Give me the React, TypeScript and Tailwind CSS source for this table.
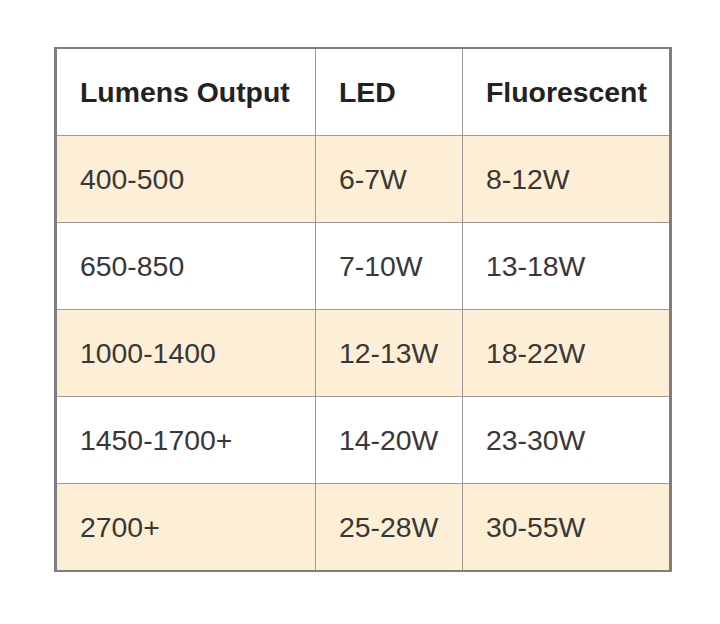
const rows = [
  ['400-500', '6-7W', '8-12W'],
  ['650-850', '7-10W', '13-18W'],
  ['1000-1400', '12-13W', '18-22W'],
  ['1450-1700+', '14-20W', '23-30W'],
  ['2700+', '25-28W', '30-55W'],
];

export default function App() {
  return (
    <div className="w-[720px] h-[624px] bg-white pt-[47px] pl-[54px] font-['Liberation_Sans',Arial,sans-serif]">
      <div className="w-[618px] border-x-[3px] border-y-2 border-[#7e7e7e]">
        <div className="grid grid-cols-[258px_146px_206px] gap-px bg-[#9a9a9a]">
          {['Lumens Output', 'LED', 'Fluorescent'].map((h) => (
            <div
              key={h}
              className="h-[86px] bg-white flex items-center px-[23px] text-[28.4px] font-bold text-[#222]"
            >
              {h}
            </div>
          ))}
          {rows.map((r, i) =>
            r.map((c, j) => (
              <div
                key={`${i}-${j}`}
                className={`h-[86px] flex items-center px-[23px] text-[28.4px] text-[#383838] ${
                  i % 2 === 0 ? 'bg-[#fdefd6]' : 'bg-white'
                }`}
              >
                {c}
              </div>
            ))
          )}
        </div>
      </div>
    </div>
  );
}
